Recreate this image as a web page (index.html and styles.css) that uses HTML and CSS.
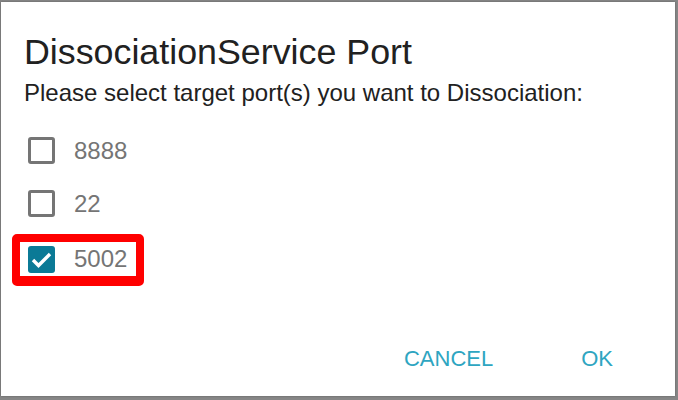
FILE: index.html
```html
<!DOCTYPE html>
<html lang="en">
<head>
    <meta charset="UTF-8">
    <title>Dissociation Service Port</title>
    <link rel="stylesheet" href="styles.css">
</head>
<body>
    <div class="dialog">
        <h2 class="dialog-title">DissociationService Port</h2>
        <p class="dialog-text">Please select target port(s) you want to Dissociation:</p>

        <div class="port-list">
            <label class="port">
                <span class="box"></span>
                <span class="port-name">8888</span>
            </label>
            <label class="port">
                <span class="box"></span>
                <span class="port-name">22</span>
            </label>
            <div class="highlight">
                <label class="port">
                    <span class="box checked">
                        <svg class="tick" viewBox="0 0 27 27"><path d="M5 14l5.5 5.5L22 8" fill="none" stroke="#fff" stroke-width="3.4"/></svg>
                    </span>
                    <span class="port-name">5002</span>
                </label>
            </div>
        </div>

        <div class="actions">
            <button class="btn">CANCEL</button>
            <button class="btn">OK</button>
        </div>
    </div>
</body>
</html>
```

FILE: styles.css
```css
body {
    margin: 0;
    width: 678px;
    height: 400px;
    overflow: hidden;
    background-color: #868686;
    font-family: "Liberation Sans", Arial, sans-serif;
}

.dialog {
    margin: 2px 0 0 1px;
    width: 674px;
    height: 394px;
    background-color: #fff;
    box-sizing: border-box;
    padding: 0 0 0 23px;
    display: flex;
    flex-direction: column;
    box-shadow: 0 0 2px rgba(0, 0, 0, 0.3);
}

.dialog-title {
    margin: 28px 0 0;
    font-size: 35.8px;
    font-weight: 400;
    line-height: 44px;
    color: #212121;
}

.dialog-text {
    margin: 4px 0 0;
    font-size: 24px;
    line-height: 30px;
    color: #212121;
}

.port-list {
    margin-top: 16px;
    display: flex;
    flex-direction: column;
}

.port {
    display: flex;
    align-items: center;
    height: 53px;
    padding-left: 4px;
}

.box {
    flex: none;
    width: 27px;
    height: 27px;
    box-sizing: border-box;
    border: 3px solid #757575;
    border-radius: 3px;
    display: flex;
    align-items: center;
    justify-content: center;
}

.box.checked {
    background-color: #0b7a96;
    border: none;
}

.tick {
    display: block;
    width: 27px;
    height: 27px;
}

.port-name {
    margin-left: 19px;
    font-size: 24px;
    color: #757575;
}

.highlight {
    margin: 4px 0 0 -12px;
    align-self: flex-start;
    border: 8px solid #ff0000;
    border-bottom-width: 10px;
    border-radius: 5px;
    padding: 0 9px 0 4px;
}

.highlight .port {
    height: 34px;
}

.actions {
    margin-top: auto;
    display: flex;
    justify-content: flex-end;
    padding: 0 50px 14px 0;
    gap: 64px;
}

.btn {
    border: none;
    background: none;
    padding: 10px 12px;
    font-family: inherit;
    font-size: 22px;
    color: #2ea5c1;
    cursor: pointer;
}
```
